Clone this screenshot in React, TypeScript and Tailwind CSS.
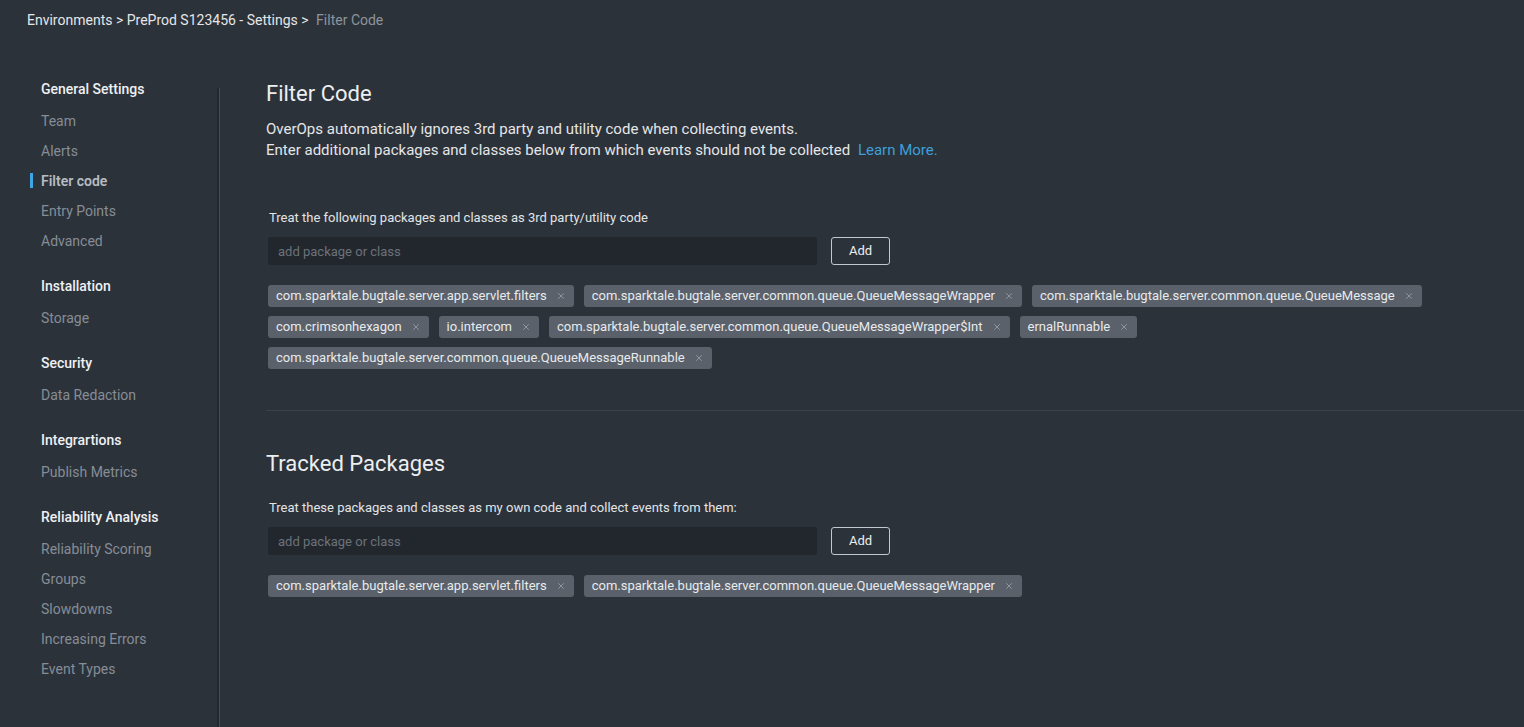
import { X } from 'lucide-react';

const sections = [
  { title: 'General Settings', items: ['Team', 'Alerts', 'Filter code', 'Entry Points', 'Advanced'] },
  { title: 'Installation', items: ['Storage'] },
  { title: 'Security', items: ['Data Redaction'] },
  { title: 'Integrartions', items: ['Publish Metrics'] },
  {
    title: 'Reliability Analysis',
    items: ['Reliability Scoring', 'Groups', 'Slowdowns', 'Increasing Errors', 'Event Types'],
  },
];

const filtered = [
  'com.sparktale.bugtale.server.app.servlet.filters',
  'com.sparktale.bugtale.server.common.queue.QueueMessageWrapper',
  'com.sparktale.bugtale.server.common.queue.QueueMessage',
  'com.crimsonhexagon',
  'io.intercom',
  'com.sparktale.bugtale.server.common.queue.QueueMessageWrapper$Int',
  'ernalRunnable',
  'com.sparktale.bugtale.server.common.queue.QueueMessageRunnable',
];

const tracked = [
  'com.sparktale.bugtale.server.app.servlet.filters',
  'com.sparktale.bugtale.server.common.queue.QueueMessageWrapper',
];

function Tag({ label }: { label: string }) {
  return (
    <span className="flex h-[22px] items-center gap-[9px] rounded-[3px] bg-[#5a616b] pl-[8px] pr-[8px] text-[13px] text-[#e8eaec]">
      {label}
      <X size={10} strokeWidth={2} className="text-[#9aa0a7]" />
    </span>
  );
}

function PackageBox({ label, tags }: { label: string; tags: string[] }) {
  return (
    <div className="pl-[3px]">
      <p className="h-[18px] text-[13px] leading-[18px] text-[#e2e4e6]">{label}</p>
      <div className="mt-[10px] flex items-center gap-[14px] -ml-px">
        <input
          placeholder="add package or class"
          className="h-[28px] w-[549px] rounded-[3px] bg-[#22272e] px-[10px] text-[13px] text-[#e2e4e6] placeholder:text-[#6c727a] outline-none"
        />
        <button className="h-[28px] w-[59px] rounded-[3px] border border-[#c4c7cb] text-[13px] text-[#eceef0]">
          Add
        </button>
      </div>
      <div className="mt-[20px] flex flex-wrap gap-x-[10px] gap-y-[9px] -ml-px pr-[80px]">
        {tags.map((t, i) => (
          <Tag key={i} label={t} />
        ))}
      </div>
    </div>
  );
}

export default function App() {
  return (
    <div className="h-[727px] overflow-hidden bg-[#2c323a] font-['Roboto',sans-serif]">
      <div className="h-[40px] pl-[27px] pt-[10px] text-[14px] leading-[20px] text-[#e4e6e8]">
        Environments &gt; PreProd S123456 - Settings &gt;{' '}
        <span className="ml-[4px] text-[#8e949b]">Filter Code</span>
      </div>
      <div className="flex h-[687px] pt-[34px]">
        <nav className="w-[217px] shrink-0 pl-[41px]">
          {sections.map((s, i) => (
            <div key={s.title} className={i > 0 ? 'mt-[16px]' : ''}>
              <div className="h-[31px] text-[14px] font-medium leading-[31px] text-[#eef0f2]">{s.title}</div>
              {s.items.map(item => {
                const active = item === 'Filter code';
                return (
                  <div
                    key={item}
                    className={`relative h-[30px] pt-px text-[14px] leading-[30px] ${
                      active ? 'font-semibold text-[#b7bcc2]' : 'text-[#868d96]'
                    }`}
                  >
                    {active && <span className="absolute left-[-11px] top-[8px] h-[15px] w-[3px] bg-[#3ea6e6]" />}
                    {item}
                  </div>
                );
              })}
            </div>
          ))}
        </nav>
        <div className="mt-[14px] flex w-[3px] shrink-0">
          <div className="w-[2px] bg-[#23292f]" />
          <div className="w-px bg-[#474d55]" />
        </div>
        <main className="flex-1 pl-[46px] pt-[5px]">
          <h1 className="h-[30px] text-[22px] leading-[30px] text-[#eceef0]">Filter Code</h1>
          <div className="mt-[10px] text-[15px] leading-[21px] text-[#e4e6e8]">
            <p>OverOps automatically ignores 3rd party and utility code when collecting events.</p>
            <p>
              Enter additional packages and classes below from which events should not be collected{' '}
              <span className="ml-[4px] text-[#3d9fd9]">Learn More.</span>
            </p>
          </div>
          <div className="mt-[48px]">
            <PackageBox label="Treat the following packages and classes as 3rd party/utility code" tags={filtered} />
          </div>
          <div className="mt-[41px] h-px bg-[#3c424a]" />
          <h2 className="mt-[38px] h-[30px] text-[22px] leading-[30px] text-[#eceef0]">Tracked Packages</h2>
          <div className="mt-[20px]">
            <PackageBox label="Treat these packages and classes as my own code and collect events from them:" tags={tracked} />
          </div>
        </main>
      </div>
    </div>
  );
}
